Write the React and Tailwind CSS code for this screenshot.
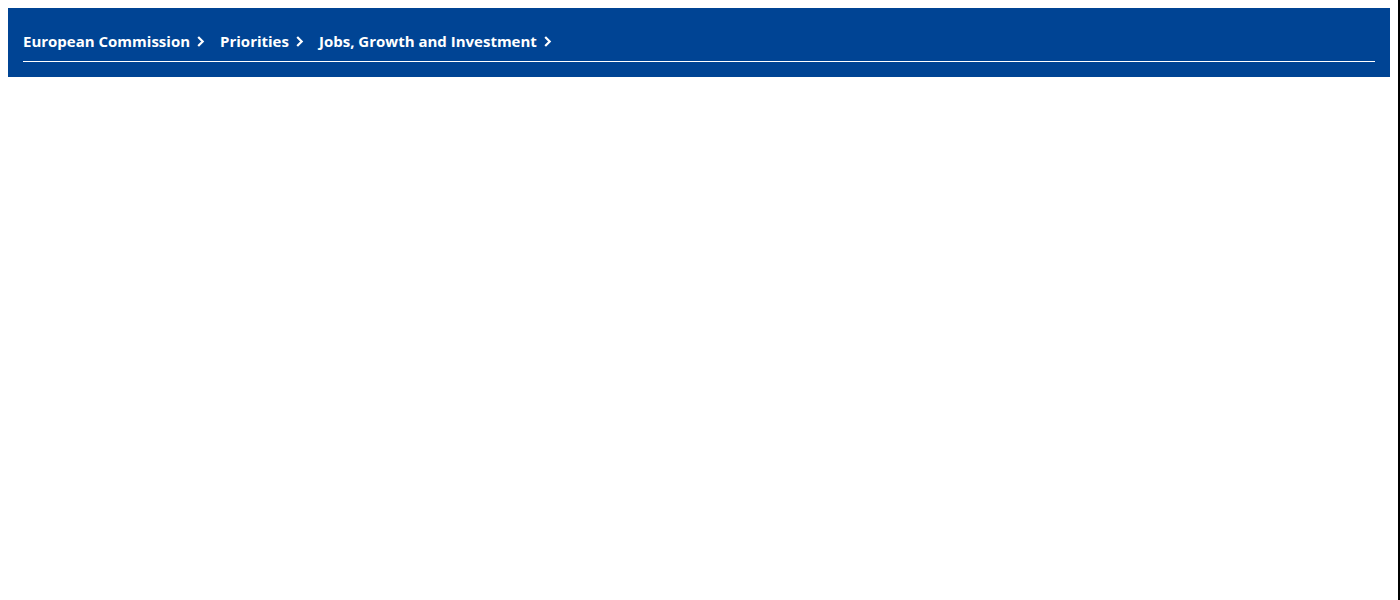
import React from "react";

function Chevron() {
  return (
    <svg width="8" height="11" viewBox="0 0 8 11" className="shrink-0" aria-hidden="true">
      <path d="M1.2 1 L5.7 5.5 L1.2 10" fill="none" stroke="#ffffff" strokeWidth="2.2" strokeLinecap="butt" strokeLinejoin="miter" />
    </svg>
  );
}

const items = ["European Commission", "Priorities", "Jobs, Growth and Investment"];

export default function App() {
  return (
    <div className="flex w-[1400px] h-[600px] bg-white" style={{ fontFamily: '"Open Sans", "Noto Sans", Arial, sans-serif' }}>
      <div className="w-[1398px] p-2">
        <div className="bg-[#004494] px-[15px] pt-[23px] pb-[15px]">
          <nav className="flex items-center border-b border-white pb-[10px]">
            {items.map((t, i) => (
              <div key={t} className="flex items-center">
                <span className="text-white text-[15px] leading-[20px] font-bold">{t}</span>
                <span className="ml-[7px] mr-[15px] flex items-center pt-[1px]"><Chevron /></span>
              </div>
            ))}
          </nav>
        </div>
      </div>
      <div className="w-[2px] h-[600px] bg-black" />
    </div>
  );
}
